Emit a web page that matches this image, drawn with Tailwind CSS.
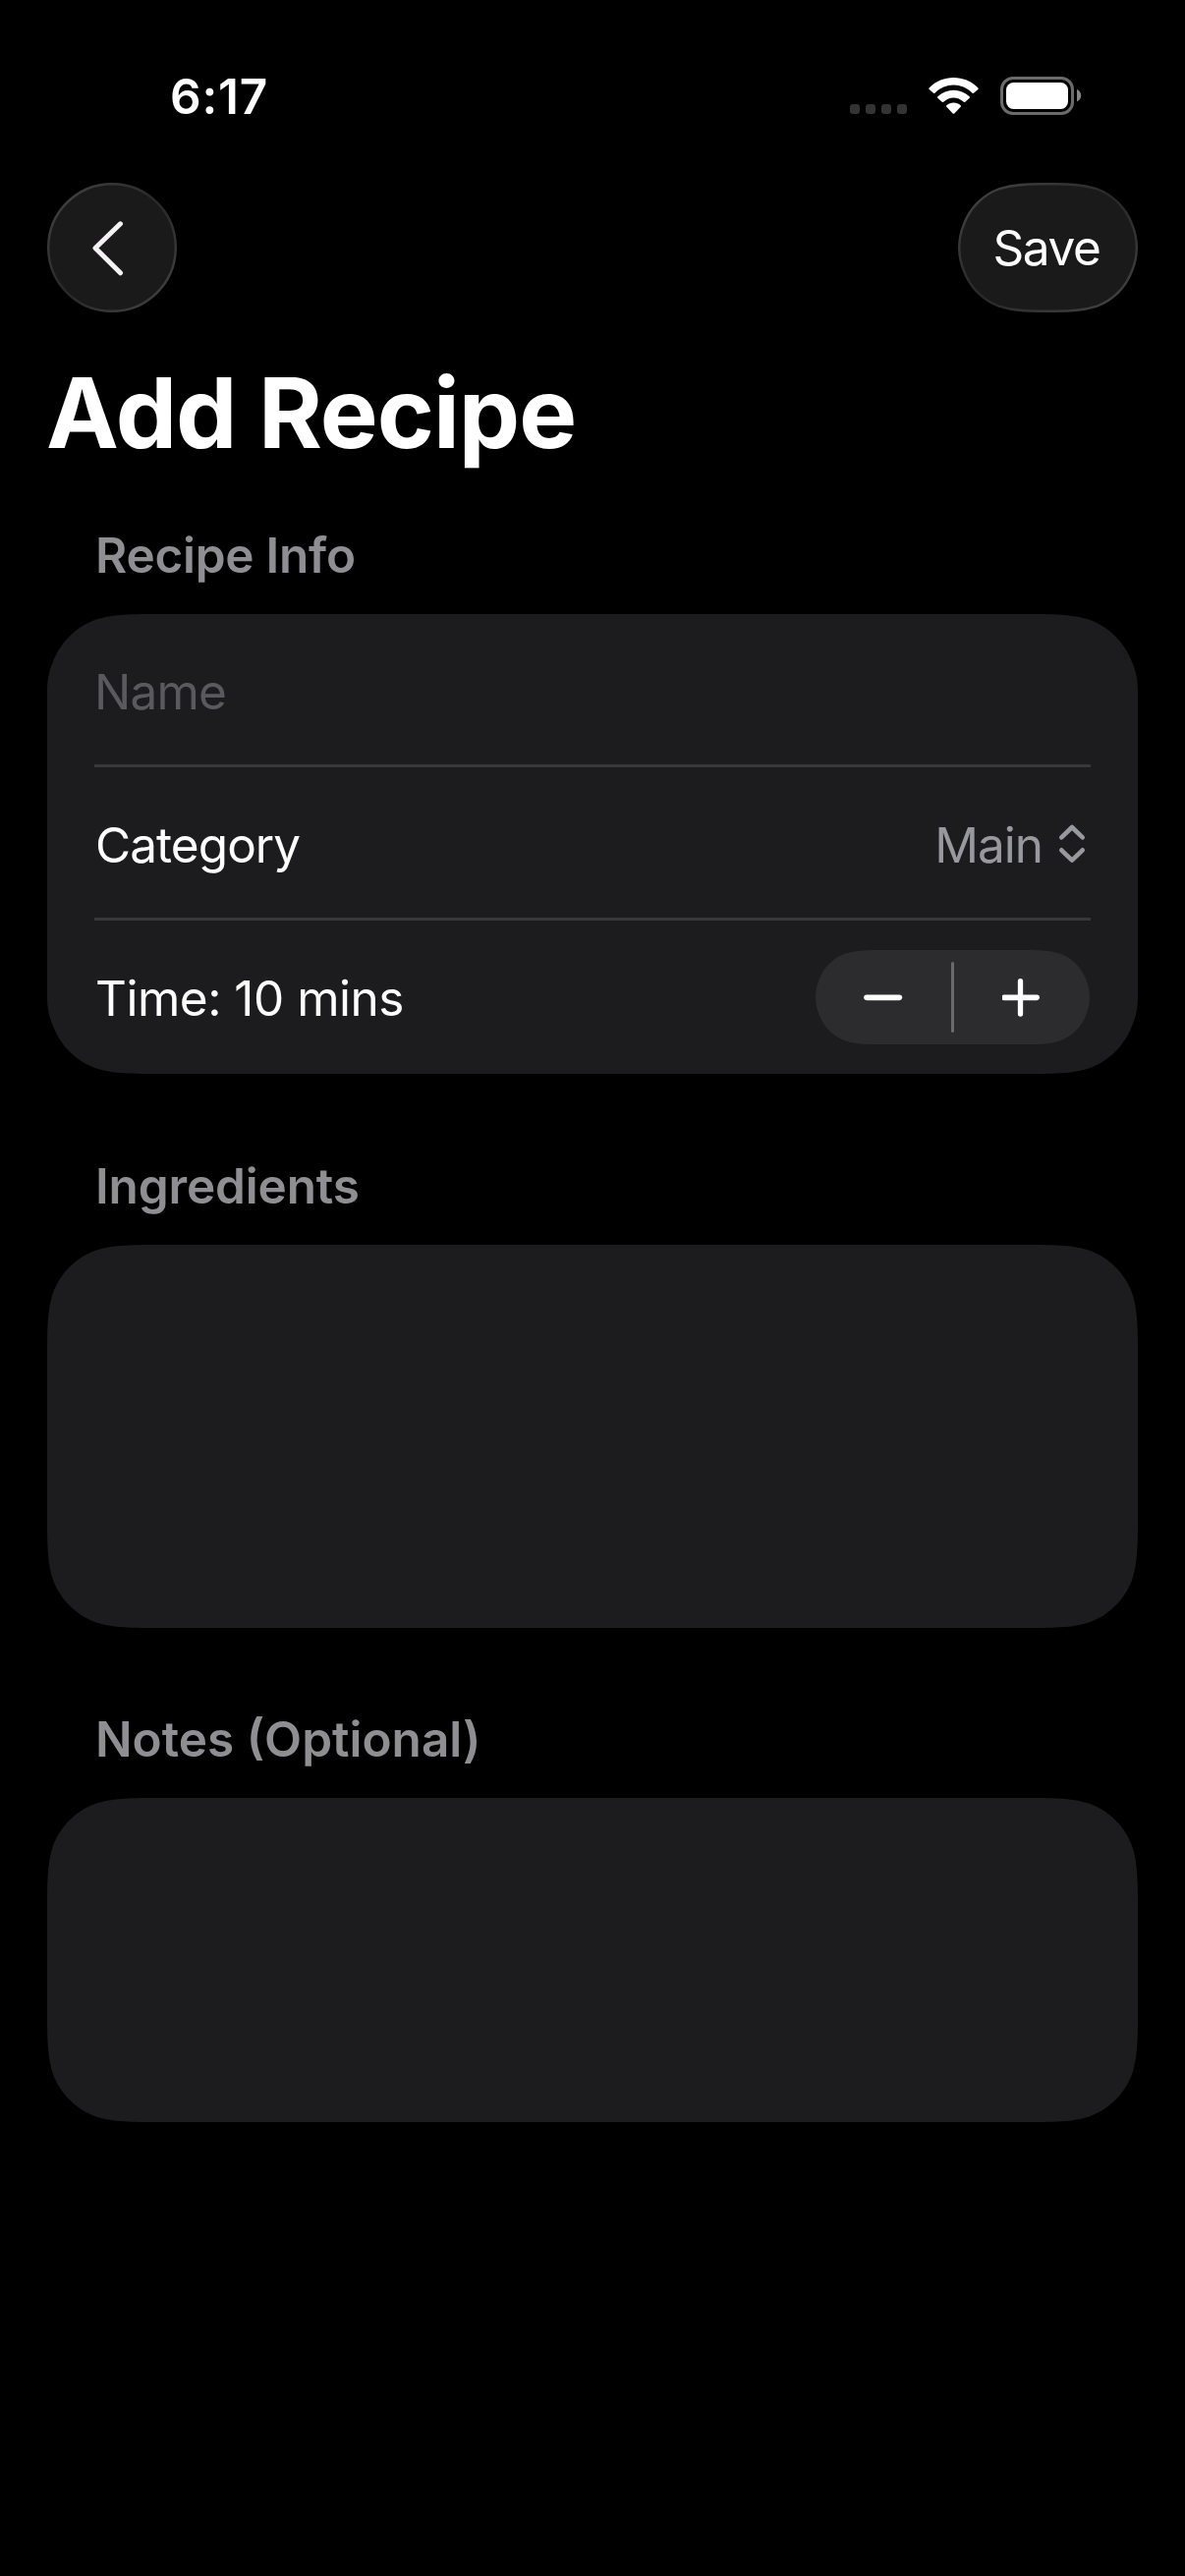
<!DOCTYPE html>
<html lang="en">
<head>
<meta charset="utf-8">
<title>Add Recipe</title>
<script src="https://cdn.jsdelivr.net/npm/@tailwindcss/browser@4"></script>
</head>
<body class="bg-black">
<main class="flex h-[2622px] w-[1206px] flex-col overflow-hidden bg-black font-['Inter',sans-serif] text-[49.5px] leading-[60px] text-white">

  <!-- Status bar -->
  <header class="flex h-[186px] items-start justify-between pr-[105px] pl-[173px]">
    <span class="pt-[68px] font-semibold tracking-[0.8px]">6:17</span>
    <svg class="mt-[76px]" width="236" height="42" viewBox="865 76 236 42" fill="none">
      <g fill="#333333">
        <rect x="865" y="106" width="10" height="10" rx="3.2"/>
        <rect x="881" y="106" width="10" height="10" rx="3.2"/>
        <rect x="897" y="106" width="10" height="10" rx="3.2"/>
        <rect x="913" y="106" width="10" height="10" rx="3.2"/>
      </g>
      <g fill="#fff">
        <path d="M945.6 89.4 C959.5 75.5 981.500 75.500 995.400 89.400 Q996 90.200 995.300 91 L991 94.800 Q990.300 95.300 989.600 94.700 C978.500 83.800 962.500 83.800 951.400 94.700 Q950.700 95.300 950 94.800 L945.700 91 Q945 90.200 945.600 89.400Z"/>
        <path d="M954.300 98.300 C963.500 89.500 977.500 89.500 986.700 98.300 Q987.300 99 986.700 99.700 L982.300 103.700 Q981.500 104.300 980.800 103.700 C974.500 98 966.500 98 960.200 103.700 Q959.500 104.300 958.700 103.700 L954.300 99.700 Q953.700 99 954.300 98.300Z"/>
        <path d="M963.300 107.200 C967.500 103.700 973.500 103.700 977.700 107.200 Q978.400 108 977.700 108.800 L971.300 115.400 Q970.500 116.100 969.700 115.400 L963.300 108.800 Q962.600 108 963.300 107.200Z"/>
      </g>
      <rect x="1019.500" y="79.500" width="72" height="36" rx="11.500" stroke="#6b6b6b" stroke-width="3"/>
      <rect x="1024" y="84" width="63" height="27" rx="7.500" fill="#fff"/>
      <path d="M1096 91 C1098.700 92.200 1100.200 94.500 1100.200 97.200 S1098.700 102.200 1096 103.400Z" fill="#868686"/>
    </svg>
  </header>

  <!-- Navigation bar -->
  <nav class="flex h-[132px] items-center justify-between px-[48px]">
    <button class="size-[132px]" aria-label="Back">
      <svg width="132" height="132" viewBox="0 0 132 132" fill="none">
        <defs>
          <linearGradient id="rim" x1="0" y1="0" x2="1" y2="1">
            <stop offset="0.1" stop-color="#404040"/>
            <stop offset="0.5" stop-color="#282828"/>
            <stop offset="0.9" stop-color="#404040"/>
          </linearGradient>
        </defs>
        <circle cx="66" cy="66" r="64.800" fill="#1a1a1a" stroke="url(#rim)" stroke-width="2.400"/>
        <path d="M74.500 41.800 L49 66.500 L74.500 91.800" stroke="#f3f1f3" stroke-width="5" stroke-linecap="round" stroke-linejoin="round"/>
      </svg>
    </button>
    <button class="grid h-[132px] w-[183px] place-items-center">
      <svg class="col-start-1 row-start-1" width="183" height="132" viewBox="0 0 183 132" fill="none">
        <path transform="translate(1.2 1.2) scale(.98689 .98182)" d="M85 0 H98 C111 0 126 0 141.300 4.900 C158.400 11.200 171.800 24.600 178.100 41.700 C181.200 49 183 57 183 66 C183 75 181.200 83 178.100 90.300 C171.800 107.400 158.400 120.800 141.300 127.100 C126 132 111 132 98 132 H85 C72 132 57 132 41.700 127.100 C24.600 120.800 11.200 107.400 4.900 90.300 C1.800 83 0 75 0 66 C0 57 1.800 49 4.900 41.700 C11.200 24.600 24.600 11.200 41.700 4.900 C57 0 72 0 85 0Z" fill="#1a1a1a" stroke="url(#rim)" stroke-width="2.400"/>
      </svg>
      <span class="col-start-1 row-start-1 pr-[3px] tracking-[-1.4px]">Save</span>
    </button>
  </nav>

  <h1 class="mt-[42px] h-[120px] pl-[47px] text-[99px] leading-[120px] font-bold tracking-[-1px]">Add Recipe</h1>

  <!-- Recipe Info -->
  <section class="px-[48px] pt-[55px]">
    <h2 class="h-[90px] pl-[49px] font-semibold tracking-[-0.25px] text-[#8e8e93]">Recipe Info</h2>
    <div class="flex h-[468px] flex-col bg-[#1c1c1e] px-[48px] [clip-path:path('M119_0_H991_C1025.1_0_1042.3_0_1060.7_5.8_C1080.9_13.2_1096.8_29.1_1104.2_49.3_C1107.8_57_1110_67_1110_78_V390_C1110_401_1107.8_411_1104.2_418.7_C1096.8_438.9_1080.9_454.8_1060.7_462.2_C1042.3_468_1025.1_468_991_468_H119_C84.9_468_67.7_468_49.3_462.2_C29.1_454.8_13.2_438.9_5.8_418.7_C2.2_411_0_401_0_390_V78_C0_67_2.2_57_5.8_49.3_C13.2_29.1_29.1_13.2_49.3_5.8_C67.7_0_84.9_0_119_0Z')]">
      <div class="flex h-[156px] items-center border-b-3 border-[#38383a] pt-[5px]">
        <span class="tracking-[-0.8px] text-[#5a5a5e]">Name</span>
      </div>
      <div class="flex h-[156px] items-center justify-between border-b-3 border-[#38383a] pt-[4px]">
        <span class="pl-[1px] tracking-[-0.95px]">Category</span>
        <div class="flex items-center gap-[15px] pr-[4px] text-[#98989f]">
          <span class="tracking-[-1px]">Main</span>
          <svg class="-mt-[2px]" width="30" height="42" viewBox="0 0 30 42" fill="none" stroke="currentColor" stroke-width="4.600" stroke-linecap="round" stroke-linejoin="round">
            <path d="M4.300 14.300 L15 4 L25.700 14.300 M4.300 27.300 L15 37.600 L25.700 27.300"/>
          </svg>
        </div>
      </div>
      <div class="flex h-[156px] items-center justify-between">
        <span class="pt-[1px] pl-[1px] tracking-[-0.5px]">Time: 10 mins</span>
        <div class="mr-[1px] flex h-[96px] w-[279px] items-center bg-[#2c2c2e] [clip-path:path('M73_0_H206_C226.8_0_237.3_0_248.7_3.6_C261.1_8.1_270.9_17.9_275.4_30.3_C277.7_36_279_42_279_48_C279_54_277.7_60_275.4_65.7_C270.9_78.1_261.1_87.900_248.7_92.4_C237.3_96_226.8_96_206_96_H73_C52.2_96_41.7_96_30.3_92.4_C17.9_87.9_8.1_78.1_3.6_65.7_C1.3_60_0_54_0_48_C0_42_1.3_36_3.6_30.3_C8.1_17.9_17.9_8.1_30.3_3.6_C41.7_0_52.2_0_73_0Z')]">
          <button class="flex w-[138px] justify-center" aria-label="Decrease">
            <svg width="40" height="40" viewBox="0 0 40 40" stroke="#fff" stroke-width="5.700" stroke-linecap="round"><path d="M3 20.300 H36.300"/></svg>
          </button>
          <span class="h-[72px] w-[3px] rounded-full bg-[#6a6a6c]"></span>
          <button class="flex w-[138px] justify-center" aria-label="Increase">
            <svg width="40" height="40" viewBox="0 0 40 40" stroke="#fff" stroke-linecap="round"><path d="M1.800 20.300 H35.100" stroke-width="5.700"/><path d="M18.500 3.700 V37" stroke-width="5.300"/></svg>
          </button>
        </div>
      </div>
    </div>
  </section>

  <!-- Ingredients -->
  <section class="px-[48px] pt-[84px]">
    <h2 class="h-[90px] pl-[49px] font-semibold tracking-[-0.15px] text-[#8e8e93]">Ingredients</h2>
    <div class="h-[390px] bg-[#1c1c1e] [clip-path:path('M119_0_H991_C1025.1_0_1042.3_0_1060.7_5.8_C1080.9_13.2_1096.8_29.1_1104.2_49.3_C1110_67.7_1110_84.9_1110_119_V271_C1110_305.1_1110_322.3_1104.2_340.7_C1096.8_360.9_1080.9_376.8_1060.7_384.2_C1042.3_390_1025.1_390_991_390_H119_C84.9_390_67.7_390_49.3_384.2_C29.1_376.8_13.2_360.9_5.8_340.7_C0_322.3_0_305.1_0_271_V119_C0_84.9_0_67.7_5.8_49.3_C13.2_29.1_29.1_13.2_49.3_5.8_C67.7_0_84.9_0_119_0Z')]"></div>
  </section>

  <!-- Notes -->
  <section class="px-[48px] pt-[83px]">
    <h2 class="h-[90px] pl-[49px] font-semibold tracking-[0px] text-[#8e8e93]">Notes (Optional)</h2>
    <div class="h-[330px] bg-[#1c1c1e] [clip-path:path('M119_0_H991_C1025.1_0_1042.3_0_1060.7_5.8_C1080.9_13.2_1096.8_29.1_1104.2_49.3_C1110_67.7_1110_84.9_1110_119_V211_C1110_245.1_1110_262.3_1104.2_280.7_C1096.8_300.9_1080.9_316.8_1060.7_324.2_C1042.3_330_1025.1_330_991_330_H119_C84.9_330_67.7_330_49.3_324.2_C29.1_316.8_13.2_300.9_5.8_280.7_C0_262.3_0_245.1_0_211_V119_C0_84.9_0_67.7_5.8_49.3_C13.2_29.1_29.1_13.2_49.3_5.8_C67.7_0_84.9_0_119_0Z')]"></div>
  </section>
</main>
</body>
</html>
